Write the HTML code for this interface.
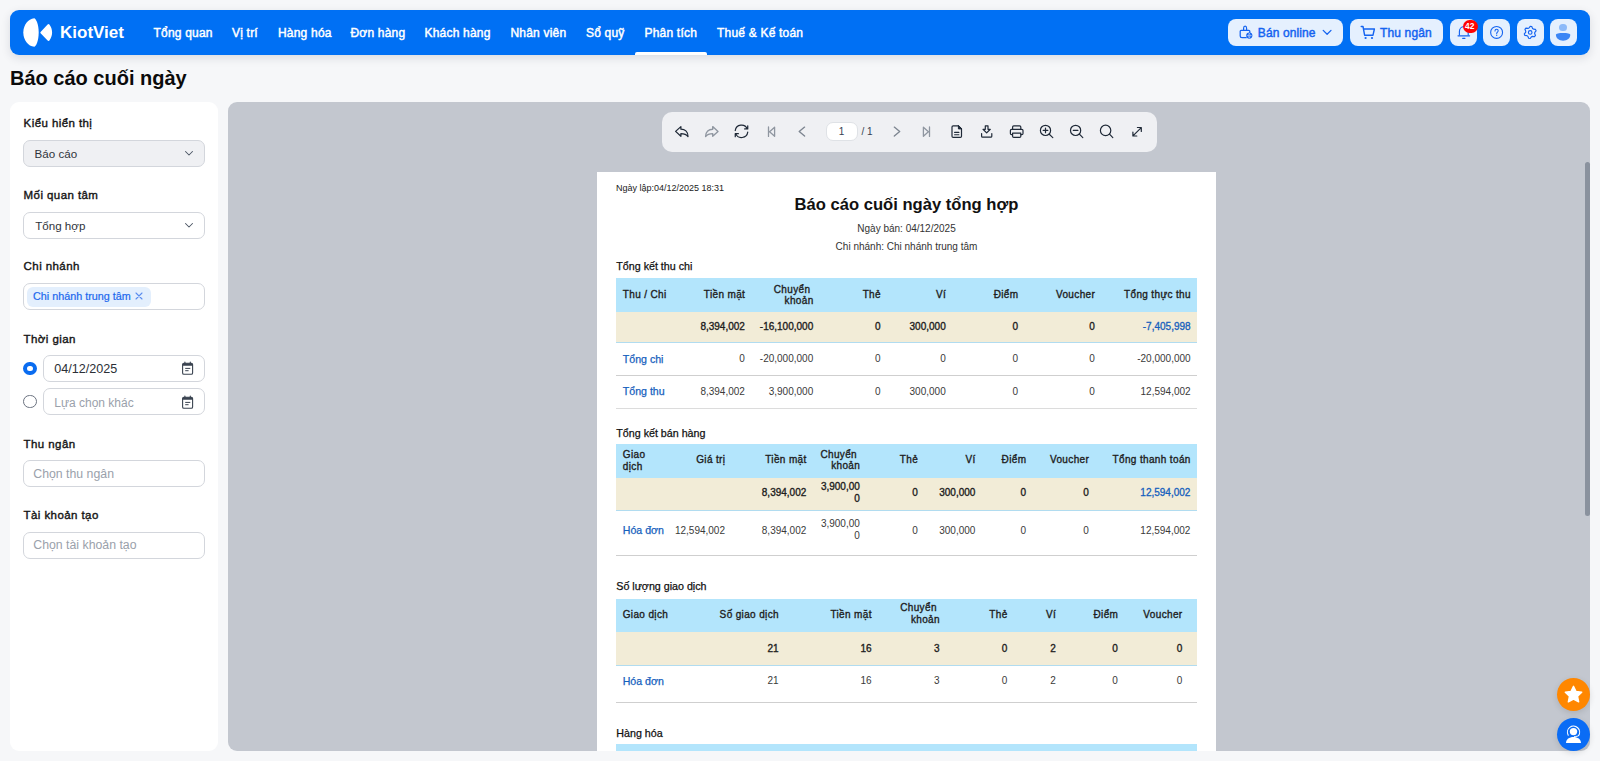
<!DOCTYPE html>
<html>
<head>
<meta charset="utf-8">
<style>
*{box-sizing:border-box;margin:0;padding:0}
html,body{width:1600px;height:761px;overflow:hidden}
body{background:#f6f7f9;font-family:"Liberation Sans",sans-serif;position:relative;color:#1f2937}
.a{position:absolute}
.t{position:absolute;line-height:1;white-space:nowrap}
#hdr{left:10px;top:10px;width:1580px;height:45px;background:#0070f4;border-radius:9px;box-shadow:0 3px 10px rgba(30,40,60,.13)}
.nav{position:absolute;top:26.5px;font-size:12px;font-weight:400;letter-spacing:0.2px;-webkit-text-stroke:0.45px #fff;color:#fff;line-height:1;white-space:nowrap}
.hbtn{position:absolute;top:19px;height:27px;background:#e5f0fe;border-radius:8px}
.ibtn{position:absolute;top:19px;width:27px;height:27px;background:#e5f0fe;border-radius:8px}
#side{left:10px;top:102px;width:208px;height:649px;background:#fff;border-radius:9px}
.lbl{position:absolute;left:23.6px;font-size:11.5px;font-weight:400;letter-spacing:0.42px;-webkit-text-stroke:0.38px #141414;color:#141414;line-height:1;white-space:nowrap}
.box{position:absolute;left:23px;width:182px;height:27px;border:1px solid #d3d6dc;border-radius:7px;background:#fff}
.ph{position:absolute;font-size:12px;color:#9aa1ab;line-height:1;white-space:nowrap}
#panel{left:228px;top:102px;width:1362px;height:649px;background:#c3c7cf;border-radius:9px;overflow:hidden}
#tb{left:661.7px;top:111.7px;width:495px;height:40.2px;background:#eff0f3;border-radius:10px}
#page{left:597px;top:172px;width:619px;height:600px;background:#fff}
.r{position:absolute;line-height:1;white-space:nowrap;font-family:"Liberation Sans",sans-serif}
.r2{position:absolute;line-height:11.5px;white-space:nowrap;font-size:10px;font-family:"Liberation Sans",sans-serif}
.r{font-size:10px}
.sec{font-size:10.7px;color:#111;-webkit-text-stroke:0.25px #111}
.hd{font-weight:400;letter-spacing:0.36px;margin-right:-0.36px;color:#1e1e1e;-webkit-text-stroke:0.35px #1e1e1e}
.bv{font-weight:400;color:#1e1e1e;-webkit-text-stroke:0.35px #1e1e1e}
.v{color:#3a3a3a}
.lkb{font-size:10.6px;color:#1560bd;-webkit-text-stroke:0.25px #1560bd}
.lkbv{color:#1560bd;-webkit-text-stroke:0.3px #1560bd}
</style>
</head>
<body>
<!-- HEADER -->
<div id="hdr" class="a"></div>
<svg class="a" style="left:0;top:0" width="140" height="60" viewBox="0 0 140 60">
  <path d="M34.2 18.2 C35.6 18.2 38.7 23.5 38.7 32.5 C38.7 41.5 35.6 46.8 34.2 46.8 C28.2 46.3 23.3 40 23.3 32.5 C23.3 25 28.2 18.7 34.2 18.2 Z" fill="#fff"/>
  <path d="M47.6 24.6 C48.2 23.9 48.9 23.9 49.4 24.6 C51 26.6 52.1 29.5 52.1 32.5 C52.1 35.5 51 38.4 49.4 40.4 C48.9 41.1 48.2 41.1 47.6 40.5 L40.6 33.3 C40.2 32.9 40.2 32.3 40.6 31.9 Z" fill="#fff"/>
</svg>
<div class="t" style="left:60px;top:24.2px;font-size:17px;font-weight:700;color:#fff">KiotViet</div>
<div class="nav" style="left:153.5px">Tổng quan</div>
<div class="nav" style="left:232.0px">Vị trí</div>
<div class="nav" style="left:278.0px">Hàng hóa</div>
<div class="nav" style="left:350.5px">Đơn hàng</div>
<div class="nav" style="left:424.5px">Khách hàng</div>
<div class="nav" style="left:510.5px">Nhân viên</div>
<div class="nav" style="left:586.0px">Sổ quỹ</div>
<div class="nav" style="left:644.5px">Phân tích</div>
<div class="nav" style="left:717.0px">Thuế &amp; Kế toán</div>
<div class="a" style="left:635px;top:52px;width:72px;height:3px;background:#fff;border-radius:2px 2px 0 0"></div>

<!-- right header buttons -->
<div class="hbtn" style="left:1228px;width:115px"></div>
<div class="hbtn" style="left:1350px;width:93px"></div>
<div class="ibtn" style="left:1450px"></div>
<div class="ibtn" style="left:1483px"></div>
<div class="ibtn" style="left:1516.5px"></div>
<div class="ibtn" style="left:1550px"></div>
<svg class="a" style="left:1236px;top:22px" width="20" height="20" viewBox="1236 22 20 20">
 <path d="M1243.6 30 V28.2 C1243.6 26.9 1244.2 26.2 1245.1 26.2 C1246 26.2 1246.6 26.9 1246.6 28.2 V30" fill="none" stroke="#1463f0" stroke-width="1.2" stroke-linecap="round"/>
 <path d="M1246.2 37.7 H1242 C1240.9 37.7 1240.2 37 1240.2 36 V31.2 C1240.2 30.6 1240.6 30.3 1241.2 30.3 H1248.8 C1249.4 30.3 1249.8 30.6 1249.8 31.2 V32.4" fill="none" stroke="#1463f0" stroke-width="1.25" stroke-linecap="round" stroke-linejoin="round"/>
 <circle cx="1249.3" cy="35.6" r="3.1" fill="#1463f0"/>
 <path d="M1246.8 35.6 H1251.8 M1249.3 33.1 C1248.4 34.2 1248.4 37 1249.3 38.1 M1249.3 33.1 C1250.2 34.2 1250.2 37 1249.3 38.1" stroke="#b9cff9" stroke-width="0.7" fill="none"/>
</svg>
<div class="t" style="left:1257.8px;top:27.2px;font-size:12px;font-weight:400;letter-spacing:0.1px;-webkit-text-stroke:0.45px #1463f0;color:#1463f0">Bán online</div>
<svg class="a" style="left:1321px;top:27px" width="12" height="10" viewBox="0 0 12 10"><path d="M2.2 3.4 L6.1 7.3 L10 3.4" fill="none" stroke="#1463f0" stroke-width="1.25" stroke-linecap="round" stroke-linejoin="round"/></svg>
<svg class="a" style="left:1360px;top:25px" width="16" height="15" viewBox="0 0 16 15">
 <path d="M1.2 1.5 H3 L4.6 10.2 H13 L14.4 4 H3.7" fill="none" stroke="#1463f0" stroke-width="1.4" stroke-linecap="round" stroke-linejoin="round"/>
 <circle cx="5.6" cy="13" r="1.1" fill="#1463f0"/><circle cx="12" cy="13" r="1.1" fill="#1463f0"/>
</svg>
<div class="t" style="left:1380px;top:27.2px;font-size:12px;font-weight:400;letter-spacing:0.15px;-webkit-text-stroke:0.45px #1463f0;color:#1463f0">Thu ngân</div>
<svg class="a" style="left:1450px;top:19px" width="27" height="27" viewBox="1450 19 27 27">
 <path d="M1459.4 35.4 V31.6 C1459.4 28.7 1461.4 26.6 1463.8 26.6 C1466.2 26.6 1468.2 28.7 1468.2 31.6 V35.4" fill="none" stroke="#1463f0" stroke-width="1.15" stroke-linejoin="round"/>
 <path d="M1458 35.8 H1469.6" stroke="#1463f0" stroke-width="1.2" stroke-linecap="round"/>
 <path d="M1462.7 38.3 H1464.9" stroke="#1463f0" stroke-width="1.3" stroke-linecap="round"/>
</svg>
<div class="a" style="left:1462.7px;top:19.8px;width:15.4px;height:13.4px;border-radius:7px;background:#fe0404"></div>
<div class="t" style="left:1464.9px;top:22.4px;font-size:8.4px;font-weight:700;color:#fff;letter-spacing:0.3px">42</div>
<svg class="a" style="left:1483px;top:19px" width="27" height="27" viewBox="1483 19 27 27">
 <circle cx="1496.6" cy="32.4" r="5.95" fill="none" stroke="#1463f0" stroke-width="1.1"/>
 <path d="M1495 30.9 C1495 29.9 1495.7 29.3 1496.6 29.3 C1497.5 29.3 1498.2 29.9 1498.2 30.8 C1498.2 32 1496.7 32.1 1496.7 33.4" fill="none" stroke="#1463f0" stroke-width="1.1" stroke-linecap="round"/>
 <circle cx="1496.7" cy="35.3" r="0.7" fill="#1463f0"/>
</svg>
<svg class="a" style="left:1516px;top:19px" width="28" height="27" viewBox="1516 19 28 27">
 <path d="M1530.20 26.30 L1531.78 26.51 L1532.50 28.42 L1533.45 29.15 L1535.48 29.35 L1536.09 30.82 L1534.80 32.40 L1534.64 33.59 L1535.48 35.45 L1534.51 36.71 L1532.50 36.38 L1531.39 36.84 L1530.20 38.50 L1528.62 38.29 L1527.90 36.38 L1526.95 35.65 L1524.92 35.45 L1524.31 33.98 L1525.60 32.40 L1525.76 31.21 L1524.92 29.35 L1525.89 28.09 L1527.90 28.42 L1529.01 27.96 Z" fill="none" stroke="#1463f0" stroke-width="1.15" stroke-linejoin="round"/>
 <circle cx="1530.2" cy="32.4" r="1.8" fill="none" stroke="#1463f0" stroke-width="1.15"/>
</svg>
<div class="a" style="left:1559.4px;top:24px;width:7.4px;height:7.4px;border-radius:50%;background:#8dbaf9"></div>
<svg class="a" style="left:1550px;top:19px" width="27" height="27" viewBox="1550 19 27 27"><path d="M1555.9 34.8 C1555.9 33.5 1559 32.9 1563.1 32.9 C1567.2 32.9 1570.3 33.5 1570.3 34.8 C1570.3 38.3 1567 40.7 1563.1 40.7 C1559.2 40.7 1555.9 38.3 1555.9 34.8 Z" fill="#3c86f5"/></svg>

<!-- TITLE -->
<div class="t" style="left:10px;top:68px;font-size:20px;font-weight:700;color:#0b0b0b">Báo cáo cuối ngày</div>

<!-- SIDEBAR -->
<div id="side" class="a"></div>
<div class="lbl" style="top:118.20px">Kiểu hiển thị</div>
<div class="box" style="top:140px;background:#eff0f3"></div>
<div class="t" style="left:34.6px;top:147.8px;font-size:11.6px;color:#30343b">Báo cáo</div>
<svg class="a" style="left:184px;top:149px" width="10" height="9" viewBox="0 0 10 9"><path d="M1.5 2.5 L5 6 L8.5 2.5" fill="none" stroke="#4b5563" stroke-width="1.05" stroke-linecap="round" stroke-linejoin="round"/></svg>

<div class="lbl" style="top:190.00px">Mối quan tâm</div>
<div class="box" style="top:211.5px"></div>
<div class="t" style="left:35.2px;top:219.8px;font-size:11.6px;color:#30343b">Tổng hợp</div>
<svg class="a" style="left:184px;top:221px" width="10" height="9" viewBox="0 0 10 9"><path d="M1.5 2.5 L5 6 L8.5 2.5" fill="none" stroke="#4b5563" stroke-width="1.05" stroke-linecap="round" stroke-linejoin="round"/></svg>

<div class="lbl" style="top:261.40px">Chi nhánh</div>
<div class="box" style="top:283px"></div>
<div class="a" style="left:27px;top:287px;width:124px;height:19.5px;background:#e3effd;border-radius:6px"></div>
<div class="t" style="left:33px;top:290.5px;font-size:10.8px;color:#1b68ee;-webkit-text-stroke:0.2px #1b68ee">Chi nhánh trung tâm</div>
<svg class="a" style="left:134px;top:291px" width="10" height="10" viewBox="0 0 10 10"><path d="M2 2 L8 8 M8 2 L2 8" stroke="#5b8def" stroke-width="1.1" stroke-linecap="round"/></svg>

<div class="lbl" style="top:333.50px">Thời gian</div>
<div class="a" style="left:23.2px;top:361.6px;width:13.4px;height:13.4px;border-radius:50%;border:4px solid #0a6cf0;background:#fff"></div>
<div class="box" style="left:43px;width:162px;top:355px;height:26.5px"></div>
<div class="t" style="left:54.3px;top:363.2px;font-size:12.6px;color:#2b2f36">04/12/2025</div>
<svg class="a" style="left:180px;top:360px" width="15" height="16" viewBox="0 0 15 16">
 <rect x="2.6" y="3.3" width="10" height="11" rx="1.3" fill="none" stroke="#3a4350" stroke-width="1.1"/>
 <path d="M2.6 4.6 C2.6 3.9 3.1 3.3 3.9 3.3 H11.3 C12.1 3.3 12.6 3.9 12.6 4.6 V5.8 H2.6 Z" fill="#3a4350"/>
 <path d="M4.9 2 V3.8 M10.3 2 V3.8" stroke="#3a4350" stroke-width="1.1" stroke-linecap="round"/>
 <path d="M5.6 8.4 H9.9 M5.6 10.7 H8.2" stroke="#3a4350" stroke-width="1" stroke-linecap="round"/>
</svg>
<div class="a" style="left:23.2px;top:395px;width:13.4px;height:13.4px;border-radius:50%;border:1.3px solid #6b7280;background:#fff"></div>
<div class="box" style="left:43px;width:162px;top:388px;height:26.5px"></div>
<div class="ph" style="left:54.3px;top:396.6px">Lựa chọn khác</div>
<svg class="a" style="left:180px;top:393.5px" width="15" height="16" viewBox="0 0 15 16">
 <rect x="2.6" y="3.3" width="10" height="11" rx="1.3" fill="none" stroke="#3a4350" stroke-width="1.1"/>
 <path d="M2.6 4.6 C2.6 3.9 3.1 3.3 3.9 3.3 H11.3 C12.1 3.3 12.6 3.9 12.6 4.6 V5.8 H2.6 Z" fill="#3a4350"/>
 <path d="M4.9 2 V3.8 M10.3 2 V3.8" stroke="#3a4350" stroke-width="1.1" stroke-linecap="round"/>
 <path d="M5.6 8.4 H9.9 M5.6 10.7 H8.2" stroke="#3a4350" stroke-width="1" stroke-linecap="round"/>
</svg>

<div class="lbl" style="top:438.80px">Thu ngân</div>
<div class="box" style="top:460px;height:26.5px"></div>
<div class="ph" style="left:33.3px;top:467.7px;font-size:12.3px">Chọn thu ngân</div>

<div class="lbl" style="top:510.20px">Tài khoản tạo</div>
<div class="box" style="top:532px;height:26.5px"></div>
<div class="ph" style="left:33.3px;top:539.1px;font-size:12.3px">Chọn tài khoản tạo</div>

<!-- PANEL -->
<div id="panel" class="a"></div>
<div id="tb" class="a"></div>
<!--TOOLBAR-->
<svg class="a" style="left:662px;top:112px" width="494" height="39" viewBox="662 112 494 39">
 <g fill="none" stroke-linecap="round" stroke-linejoin="round">
  <!-- undo -->
  <path d="M675.6 131.4 L680.9 126.6 V129.2 C684.8 129.2 688 131.6 688 136.6 C686.4 134.4 684.2 133.6 680.9 133.6 V136.3 Z" stroke="#1f2937" stroke-width="1.25"/>
  <!-- redo -->
  <path d="M718 131.4 L712.7 126.6 V129.2 C708.8 129.2 705.6 131.6 705.6 136.6 C707.2 134.4 709.4 133.6 712.7 133.6 V136.3 Z" stroke="#8f96a0" stroke-width="1.35"/>
  <!-- refresh -->
  <g transform="translate(741.5 131.3) scale(-0.78 0.78) translate(-12 -12)" stroke="#1f2937" stroke-width="1.55">
   <path d="M20 11a8.1 8.1 0 0 0 -15.5 -2m-.5 -4v4h4"/>
   <path d="M4 13a8.1 8.1 0 0 0 15.5 2m.5 4v-4h-4"/>
  </g>
  <!-- first -->
  <path d="M768.5 127 V136.4 M774.6 127.2 L769.6 131.7 L774.6 136.2 Z" stroke="#8f96a0" stroke-width="1.3"/>
  <!-- prev -->
  <path d="M804.6 127.1 L799.2 131.6 L804.6 136.1" stroke="#7d8590" stroke-width="1.35"/>
  <!-- next -->
  <path d="M894.3 127.1 L899.7 131.6 L894.3 136.1" stroke="#7d8590" stroke-width="1.35"/>
  <!-- last -->
  <path d="M929.5 127 V136.4 M923.4 127.2 L928.4 131.7 L923.4 136.2 Z" stroke="#8f96a0" stroke-width="1.3"/>
  <!-- doc -->
  <path d="M958.4 125.8 H953.2 C952.5 125.8 952 126.3 952 127 V136.2 C952 136.9 952.5 137.3 953.2 137.3 H960.3 C961 137.3 961.5 136.9 961.5 136.2 V128.9 Z" stroke="#1f2937" stroke-width="1.2"/>
  <path d="M958.4 125.8 V128.9 H961.5 Z" fill="#1f2937" stroke="#1f2937" stroke-width="1"/>
  <path d="M954.6 132.4 H958.9 M954.6 134.7 H958.9" stroke="#1f2937" stroke-width="1.1"/>
  <!-- download -->
  <path d="M985.3 125.8 H988 V129.3 H990.3 L986.65 132.9 L983 129.3 H985.3 Z" stroke="#1f2937" stroke-width="1.2"/>
  <path d="M981.6 133.6 V136.2 C981.6 136.8 982 137.2 982.6 137.2 H990.8 C991.4 137.2 991.8 136.8 991.8 136.2 V133.6" stroke="#1f2937" stroke-width="1.2"/>
  <!-- print -->
  <path d="M1012.6 129.4 V127 C1012.6 126.3 1013.1 125.8 1013.8 125.8 H1019.6 C1020.3 125.8 1020.8 126.3 1020.8 127 V129.4" stroke="#1f2937" stroke-width="1.2"/>
  <path d="M1012.4 134.6 H1011.6 C1010.9 134.6 1010.4 134.1 1010.4 133.4 V130.6 C1010.4 129.9 1010.9 129.4 1011.6 129.4 H1021.8 C1022.5 129.4 1023 129.9 1023 130.6 V133.4 C1023 134.1 1022.5 134.6 1021.8 134.6 H1021" stroke="#1f2937" stroke-width="1.2"/>
  <path d="M1012.6 133.2 H1020.8 V136.2 C1020.8 136.9 1020.3 137.3 1019.6 137.3 H1013.8 C1013.1 137.3 1012.6 136.9 1012.6 136.2 Z" stroke="#1f2937" stroke-width="1.2"/>
  <!-- zoom in -->
  <circle cx="1045.5" cy="130.4" r="5.1" stroke="#1f2937" stroke-width="1.2"/>
  <path d="M1049.3 134.2 L1052.8 137.6 M1043.2 130.4 H1047.8 M1045.5 128.1 V132.7" stroke="#1f2937" stroke-width="1.2"/>
  <!-- zoom out -->
  <circle cx="1075.6" cy="130.4" r="5.1" stroke="#1f2937" stroke-width="1.2"/>
  <path d="M1079.4 134.2 L1082.8 137.6 M1073.3 130.4 H1077.9" stroke="#1f2937" stroke-width="1.2"/>
  <!-- search -->
  <circle cx="1105.6" cy="130.4" r="5.2" stroke="#1f2937" stroke-width="1.2"/>
  <path d="M1109.5 134.2 L1112.8 137.6" stroke="#1f2937" stroke-width="1.2"/>
  <!-- expand -->
  <path d="M1133.2 135.7 L1141 127.8 M1137.4 127.5 H1141.3 V131.4 M1132.9 132.1 V136 H1136.8" stroke="#1f2937" stroke-width="1.2"/>
 </g>
</svg>
<div class="a" style="left:825.5px;top:121.7px;width:32.3px;height:19.7px;background:#fff;border:1px solid #dfe2e6;border-radius:7px"></div>
<div class="r" style="left:825.5px;width:32.3px;text-align:center;top:127px;font-size:10px;color:#374151">1</div>
<div class="r" style="left:861.5px;top:127px;font-size:10px;color:#374151">/ 1</div>
<!--/TOOLBAR-->
<div class="a" style="left:0;top:0;width:1600px;height:751px;overflow:hidden">
<div id="page" class="a"></div>
<!--REPORT-->
<div class="r" style="left:616px;top:183.98px;font-size:9px;color:#222">Ngày lập:04/12/2025 18:31</div>
<div class="r" style="left:597px;width:619px;text-align:center;top:197.35px;font-size:16.6px;font-weight:700;color:#111">Báo cáo cuối ngày tổng hợp</div>
<div class="r" style="left:597px;width:619px;text-align:center;top:224.13px;font-size:10px;color:#333">Ngày bán: 04/12/2025</div>
<div class="r" style="left:597px;width:619px;text-align:center;top:242.44px;font-size:10px;color:#333">Chi nhánh: Chi nhánh trung tâm</div>
<div class="r sec" style="left:616.3px;top:261.34px">Tổng kết thu chi</div>
<div class="a" style="left:616px;top:278.2px;width:581px;height:34.5px;background:#b3e5fc"></div>
<div class="a" style="left:616px;top:311.7px;width:581px;height:30.8px;background:#f2ecd7"></div>
<div class="a" style="left:616px;top:341.8px;width:581px;height:1.2px;background:#b1dcf0"></div>
<div class="a" style="left:616px;top:374.9px;width:581px;height:1px;background:#cfcfcf"></div>
<div class="a" style="left:616px;top:407.6px;width:581px;height:1.2px;background:#dcdcdc"></div>
<div class="r hd" style="left:622.8px;top:290.14px">Thu / Chi</div>
<div class="r hd" style="right:855.1px;top:290.14px;text-align:right">Tiền mặt</div>
<div class="r2 hd" style="right:786.8px;top:283.79px;text-align:right">Chuyển&nbsp;<br>khoản</div>
<div class="r hd" style="right:719.4px;top:290.14px;text-align:right">Thẻ</div>
<div class="r hd" style="right:654.3px;top:290.14px;text-align:right">Ví</div>
<div class="r hd" style="right:581.9px;top:290.14px;text-align:right">Điểm</div>
<div class="r hd" style="right:505.2px;top:290.14px;text-align:right">Voucher</div>
<div class="r hd" style="right:409.4px;top:290.14px;text-align:right">Tổng thực thu</div>
<div class="r bv" style="right:855.1px;top:322.14px;text-align:right">8,394,002</div>
<div class="r bv" style="right:786.8px;top:322.14px;text-align:right">-16,100,000</div>
<div class="r bv" style="right:719.4px;top:322.14px;text-align:right">0</div>
<div class="r bv" style="right:654.3px;top:322.14px;text-align:right">300,000</div>
<div class="r bv" style="right:581.9px;top:322.14px;text-align:right">0</div>
<div class="r bv" style="right:505.2px;top:322.14px;text-align:right">0</div>
<div class="r lkbv" style="right:409.4px;top:322.14px;text-align:right">-7,405,998</div>
<div class="r lkb" style="left:622.8px;top:353.53px">Tổng chi</div>
<div class="r v" style="right:855.1px;top:354.04px;text-align:right">0</div>
<div class="r v" style="right:786.8px;top:354.04px;text-align:right">-20,000,000</div>
<div class="r v" style="right:719.4px;top:354.04px;text-align:right">0</div>
<div class="r v" style="right:654.3px;top:354.04px;text-align:right">0</div>
<div class="r v" style="right:581.9px;top:354.04px;text-align:right">0</div>
<div class="r v" style="right:505.2px;top:354.04px;text-align:right">0</div>
<div class="r v" style="right:409.4px;top:354.04px;text-align:right">-20,000,000</div>
<div class="r lkb" style="left:622.8px;top:386.03px">Tổng thu</div>
<div class="r v" style="right:855.1px;top:386.54px;text-align:right">8,394,002</div>
<div class="r v" style="right:786.8px;top:386.54px;text-align:right">3,900,000</div>
<div class="r v" style="right:719.4px;top:386.54px;text-align:right">0</div>
<div class="r v" style="right:654.3px;top:386.54px;text-align:right">300,000</div>
<div class="r v" style="right:581.9px;top:386.54px;text-align:right">0</div>
<div class="r v" style="right:505.2px;top:386.54px;text-align:right">0</div>
<div class="r v" style="right:409.4px;top:386.54px;text-align:right">12,594,002</div>
<div class="r sec" style="left:616.3px;top:427.64px">Tổng kết bán hàng</div>
<div class="a" style="left:616px;top:444.3px;width:581px;height:34.2px;background:#b3e5fc"></div>
<div class="a" style="left:616px;top:477.5px;width:581px;height:33.2px;background:#f2ecd7"></div>
<div class="a" style="left:616px;top:510.0px;width:581px;height:1.2px;background:#b1dcf0"></div>
<div class="a" style="left:616px;top:555.2px;width:581px;height:1.1px;background:#cfcfcf"></div>
<div class="r2 hd" style="left:622.8px;top:449.49px">Giao<br>dịch</div>
<div class="r hd" style="right:875.0px;top:455.44px;text-align:right">Giá trị</div>
<div class="r hd" style="right:793.7px;top:455.44px;text-align:right">Tiền mặt</div>
<div class="r2 hd" style="right:740.2px;top:448.69px;text-align:right">Chuyển&nbsp;<br>khoản</div>
<div class="r hd" style="right:682.2px;top:455.44px;text-align:right">Thẻ</div>
<div class="r hd" style="right:624.6px;top:455.44px;text-align:right">Ví</div>
<div class="r hd" style="right:574.0px;top:455.44px;text-align:right">Điểm</div>
<div class="r hd" style="right:511.2px;top:455.44px;text-align:right">Voucher</div>
<div class="r hd" style="right:409.6px;top:455.44px;text-align:right">Tổng thanh toán</div>
<div class="r bv" style="right:793.7px;top:488.04px;text-align:right">8,394,002</div>
<div class="r2 bv" style="right:740.2px;top:481.29px;text-align:right">3,900,00<br>0</div>
<div class="r bv" style="right:682.2px;top:488.04px;text-align:right">0</div>
<div class="r bv" style="right:624.6px;top:488.04px;text-align:right">300,000</div>
<div class="r bv" style="right:574.0px;top:488.04px;text-align:right">0</div>
<div class="r bv" style="right:511.2px;top:488.04px;text-align:right">0</div>
<div class="r lkbv" style="right:409.6px;top:488.04px;text-align:right">12,594,002</div>
<div class="r lkb" style="left:622.8px;top:525.43px">Hóa đơn</div>
<div class="r v" style="right:875.0px;top:525.93px;text-align:right">12,594,002</div>
<div class="r v" style="right:793.7px;top:525.93px;text-align:right">8,394,002</div>
<div class="r2 v" style="right:740.2px;top:518.09px;text-align:right">3,900,00<br>0</div>
<div class="r v" style="right:682.2px;top:525.93px;text-align:right">0</div>
<div class="r v" style="right:624.6px;top:525.93px;text-align:right">300,000</div>
<div class="r v" style="right:574.0px;top:525.93px;text-align:right">0</div>
<div class="r v" style="right:511.2px;top:525.93px;text-align:right">0</div>
<div class="r v" style="right:409.6px;top:525.93px;text-align:right">12,594,002</div>
<div class="r sec" style="left:616.3px;top:581.44px">Số lượng giao dịch</div>
<div class="a" style="left:616px;top:598.6px;width:581px;height:34.2px;background:#b3e5fc"></div>
<div class="a" style="left:616px;top:631.8px;width:581px;height:33.4px;background:#f2ecd7"></div>
<div class="a" style="left:616px;top:664.5px;width:581px;height:1.2px;background:#b1dcf0"></div>
<div class="a" style="left:616px;top:701.9px;width:581px;height:1.1px;background:#cfcfcf"></div>
<div class="r hd" style="left:622.7px;top:609.83px">Giao dịch</div>
<div class="r hd" style="right:821.4px;top:609.83px;text-align:right">Số giao dịch</div>
<div class="r hd" style="right:728.5px;top:609.83px;text-align:right">Tiền mặt</div>
<div class="r2 hd" style="right:660.4px;top:602.18px;text-align:right">Chuyển&nbsp;<br>khoản</div>
<div class="r hd" style="right:592.8px;top:609.83px;text-align:right">Thẻ</div>
<div class="r hd" style="right:544.1px;top:609.83px;text-align:right">Ví</div>
<div class="r hd" style="right:482.1px;top:609.83px;text-align:right">Điểm</div>
<div class="r hd" style="right:417.8px;top:609.83px;text-align:right">Voucher</div>
<div class="r bv" style="right:821.4px;top:643.93px;text-align:right">21</div>
<div class="r bv" style="right:728.5px;top:643.93px;text-align:right">16</div>
<div class="r bv" style="right:660.4px;top:643.93px;text-align:right">3</div>
<div class="r bv" style="right:592.8px;top:643.93px;text-align:right">0</div>
<div class="r bv" style="right:544.1px;top:643.93px;text-align:right">2</div>
<div class="r bv" style="right:482.1px;top:643.93px;text-align:right">0</div>
<div class="r bv" style="right:417.8px;top:643.93px;text-align:right">0</div>
<div class="r lkb" style="left:622.7px;top:675.93px">Hóa đơn</div>
<div class="r v" style="right:821.4px;top:676.43px;text-align:right">21</div>
<div class="r v" style="right:728.5px;top:676.43px;text-align:right">16</div>
<div class="r v" style="right:660.4px;top:676.43px;text-align:right">3</div>
<div class="r v" style="right:592.8px;top:676.43px;text-align:right">0</div>
<div class="r v" style="right:544.1px;top:676.43px;text-align:right">2</div>
<div class="r v" style="right:482.1px;top:676.43px;text-align:right">0</div>
<div class="r v" style="right:417.8px;top:676.43px;text-align:right">0</div>
<div class="r sec" style="left:616.3px;top:728.14px">Hàng hóa</div>
<div class="a" style="left:616px;top:744.3px;width:581px;height:20px;background:#b3e5fc"></div>
<!--/REPORT-->
</div>
<div class="a" style="left:1585px;top:162px;width:5px;height:354px;background:#8a929e;border-radius:3px 3px 3px 3px"></div>
<div class="a" style="left:1557px;top:678px;width:33px;height:33px;border-radius:50%;background:#ff8700;box-shadow:0 2px 6px rgba(0,0,0,.12)"></div>
<svg class="a" style="left:1563px;top:684px" width="21" height="21" viewBox="0 0 24 24"><path d="M12 2.6 L14.9 8.6 L21.4 9.4 L16.6 13.9 L17.9 20.4 L12 17.2 L6.1 20.4 L7.4 13.9 L2.6 9.4 L9.1 8.6 Z" fill="#fff" stroke="#fff" stroke-width="1.6" stroke-linejoin="round"/></svg>
<div class="a" style="left:1557px;top:718px;width:33px;height:33px;border-radius:50%;background:#0a6cf5;box-shadow:0 2px 6px rgba(0,0,0,.12)"></div>
<svg class="a" style="left:1557px;top:718px" width="33" height="33" viewBox="1557 718 33 33">
 <path d="M1568.2 735.2 A6.1 6.1 0 1 1 1578.6 735.6" fill="none" stroke="#fff" stroke-width="1.1" stroke-linecap="round"/>
 <path d="M1578.6 735.6 C1577.8 736.3 1576.6 736.5 1574.6 736.5" fill="none" stroke="#fff" stroke-width="1" stroke-linecap="round"/>
 <circle cx="1573.5" cy="731.6" r="3.7" fill="#fff"/>
 <path d="M1566 743.1 C1566 739.4 1569.3 737.1 1573.5 737.1 C1577.7 737.1 1581 739.4 1581 743.1 Z" fill="#fff"/>
</svg>

</body>
</html>
